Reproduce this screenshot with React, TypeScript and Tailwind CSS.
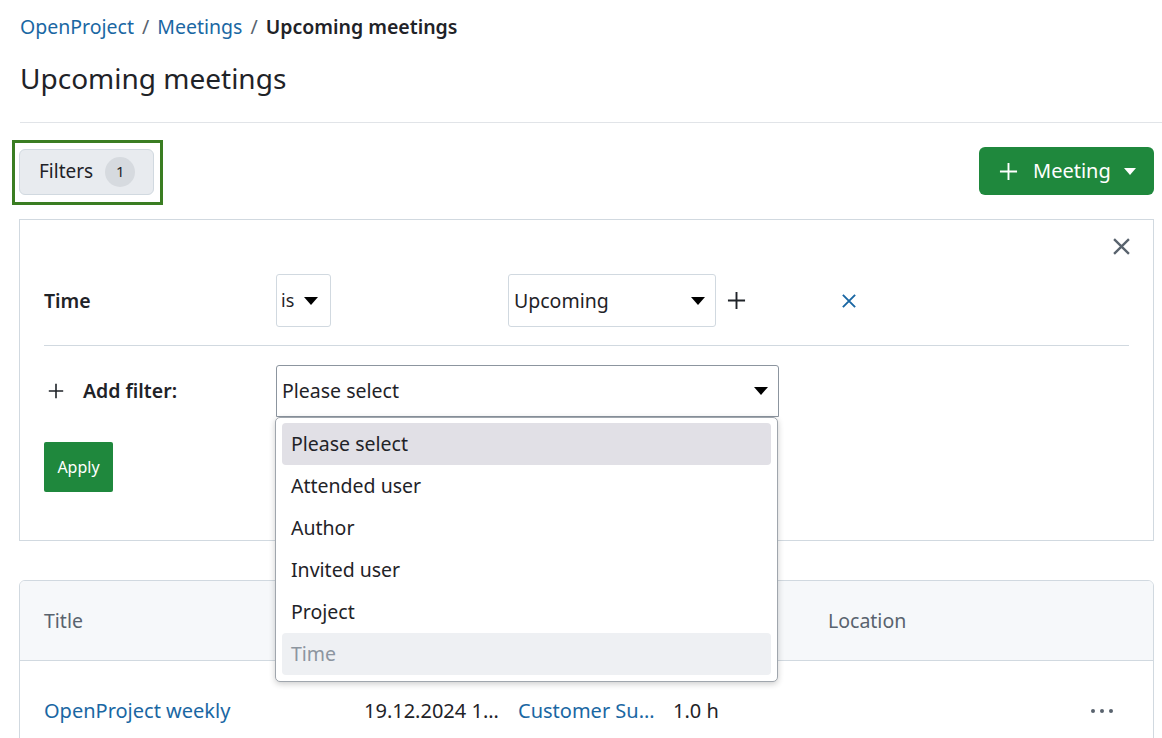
import React from "react";

const Caret = ({ className = "" }: { className?: string }) => (
  <svg viewBox="0 0 14 8" className={className} fill="currentColor">
    <path d="M0 0h14L7 8z" />
  </svg>
);

const Plus = ({ className = "", sw = 2 }: { className?: string; sw?: number }) => (
  <svg viewBox="0 0 20 20" className={className} fill="none" stroke="currentColor" strokeWidth={sw}>
    <path d="M10 1v18M1 10h18" />
  </svg>
);

const Cross = ({ className = "", sw = 2 }: { className?: string; sw?: number }) => (
  <svg viewBox="0 0 16 16" className={className} fill="none" stroke="currentColor" strokeWidth={sw}>
    <path d="M1 1l14 14M15 1L1 15" />
  </svg>
);

const options = ["Please select", "Attended user", "Author", "Invited user", "Project", "Time"];

export default function App() {
  return (
    <div className="w-[1162px] h-[738px] overflow-hidden bg-white text-[#1f2328] font-['Noto_Sans',sans-serif]">
      {/* Breadcrumb */}
      <div className="pl-5 pt-[12px] h-[42px] flex items-center gap-[8px] text-[19.5px] leading-[30px]">
        <span className="text-[#1a67a3]">OpenProject</span>
        <span className="text-[#59636e]">/</span>
        <span className="text-[#1a67a3]">Meetings</span>
        <span className="text-[#59636e]">/</span>
        <span className="font-semibold">Upcoming meetings</span>
      </div>
      {/* Title */}
      <div className="pl-5 mt-[16px] h-[40px] text-[28px] leading-[40px]">Upcoming meetings</div>
      <div className="ml-5 mt-[24px] border-t border-[#e1e4e8]" />

      {/* Toolbar */}
      <div className="pl-[19px] pr-[8px] mt-[24px] flex items-center justify-between h-[48px]">
        <div className="relative mt-[1px]">
          <div className="absolute left-[-7px] top-[-9px] w-[151px] h-[65px] border-[3px] border-[#3a7d22]" />
          <button className="h-[46px] w-[135px] rounded-[6px] border border-[#d1d9e0] bg-[#e8ebef] flex items-center pl-[19px] gap-[12px] text-[19px]">
            <span>Filters</span>
            <span className="w-[30px] h-[30px] rounded-full bg-[#d6dadf] flex items-center justify-center text-[15px]">1</span>
          </button>
        </div>
        <button className="h-[48px] w-[175px] rounded-[6px] bg-[#1f883d] text-white flex items-center pl-[20px] text-[20px]">
          <Plus className="w-[19px] h-[19px]" sw={2} />
          <span className="ml-[15px]">Meeting</span>
          <Caret className="w-[12px] h-[7px] ml-[13px]" />
        </button>
      </div>

      {/* Filter panel */}
      <div className="ml-[19px] mr-[8px] mt-[24px] border border-[#d1d9e0] px-6 pt-[17px] pb-[48px]">
        <div className="h-[37px] flex justify-end items-start pr-[1px] -mr-[2px]">
          <Cross className="w-[17px] h-[17px] text-[#59636e] mt-[1px]" sw={2.2} />
        </div>
        <div className="flex items-center h-[53px]">
          <div className="w-[232px] font-semibold text-[19.5px]">Time</div>
          <div className="w-[55px] h-[53px] border border-[#d1d9e0] rounded-[3px] flex items-center pl-[4px] gap-[10px] text-[18px]">
            <span>is</span>
            <Caret className="w-[14px] h-[8px] text-black" />
          </div>
          <div className="w-[177px]" />
          <div className="w-[208px] h-[53px] border border-[#d1d9e0] rounded-[3px] flex items-center justify-between pl-[5px] pr-[10px] text-[19.5px]">
            <span>Upcoming</span>
            <Caret className="w-[14px] h-[8px] text-black" />
          </div>
          <Plus className="w-[19px] h-[19px] ml-[11px] text-[#1f2328]" sw={2} />
          <Cross className="w-[14px] h-[14px] ml-[96px] text-[#1a67a3]" sw={2.2} />
        </div>
        <div className="mt-[18px] border-t border-[#d1d9e0]" />
        <div className="mt-[19px] flex items-center h-[52px]">
          <div className="w-[232px] flex items-center">
            <Plus className="w-[16px] h-[16px] ml-[4px]" sw={2} />
            <span className="ml-[19px] font-semibold text-[19.5px]">Add filter:</span>
          </div>
          <div className="relative">
            <div className="w-[503px] h-[52px] border border-[#8c959f] rounded-t-[3px] flex items-center justify-between pl-[5px] pr-[10px] text-[19.5px]">
              <span>Please select</span>
              <Caret className="w-[14px] h-[8px] text-black" />
            </div>
            <div className="absolute left-[-1px] top-[52px] z-10 w-[503px] bg-white border border-[#a0a6ad] rounded-[5px] shadow-[0_2px_6px_rgba(0,0,0,0.2)] px-[6px] pt-[5px] pb-[6px]">
              {options.map((o, i) => (
                <div
                  key={o}
                  className={
                    "h-[42px] flex items-center pl-[9px] rounded-[4px] text-[19.5px] " +
                    (i === 0 ? "bg-[#e1e0e6]" : i === 5 ? "bg-[#eef0f3] text-[#8c959f]" : "")
                  }
                >
                  {o}
                </div>
              ))}
            </div>
          </div>
        </div>
        <button className="mt-[25px] w-[69px] h-[50px] rounded-[2px] bg-[#1f883d] text-white text-[16px] flex items-center justify-center">
          Apply
        </button>
      </div>

      {/* Table */}
      <div className="ml-[19px] mr-[8px] mt-[39px] border border-[#d1d9e0] rounded-t-[6px] overflow-hidden">
        <div className="h-[80px] bg-[#f6f8fa] border-b border-[#d1d9e0] flex items-center text-[19.5px] text-[#59636e]">
          <div className="w-[344px] pl-6">Title</div>
          <div className="w-[154px]">Date and time</div>
          <div className="w-[155px]">Project</div>
          <div className="w-[155px]">Duration</div>
          <div className="flex-1">Location</div>
        </div>
        <div className="h-[100px] flex items-center text-[20px]">
          <div className="w-[344px] pl-6 text-[#1a67a3]">OpenProject weekly</div>
          <div className="w-[154px] pr-[18px] truncate">19.12.2024 10:00</div>
          <div className="w-[155px] pr-[12px] truncate text-[#1a67a3]">Customer Success</div>
          <div className="w-[155px]">1.0 h</div>
          <div className="flex-1" />
          <div className="w-[62px] flex items-center gap-[5px] text-[#59636e]">
            <span className="w-[4px] h-[4px] rounded-full bg-current" />
            <span className="w-[4px] h-[4px] rounded-full bg-current" />
            <span className="w-[4px] h-[4px] rounded-full bg-current" />
          </div>
        </div>
      </div>
    </div>
  );
}
